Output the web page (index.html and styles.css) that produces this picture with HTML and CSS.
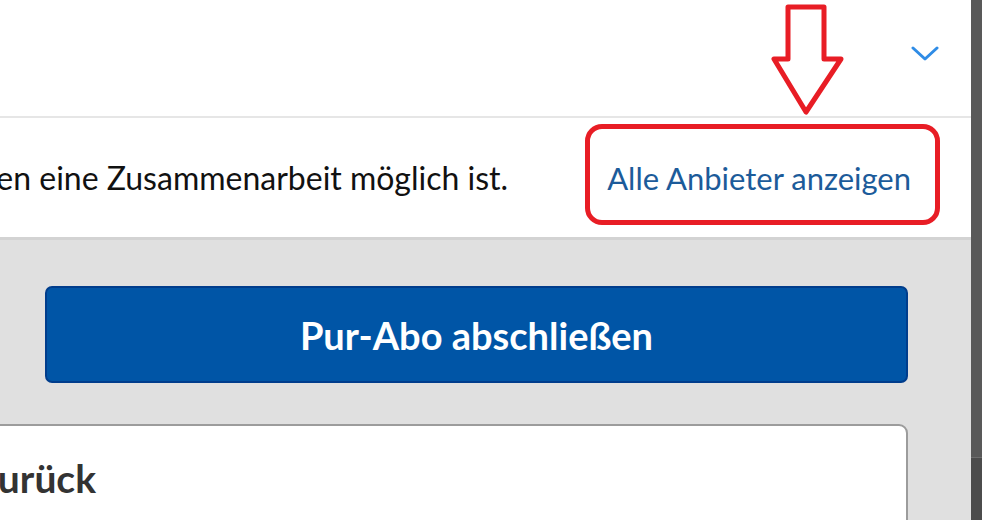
FILE: index.html
```html
<!DOCTYPE html>
<html lang="de">
<head>
  <meta charset="UTF-8">
  <meta name="viewport" content="width=device-width, initial-scale=1.0">
  <title>Datenschutz-Einstellungen</title>
  <link rel="stylesheet" href="styles.css">
</head>
<body>
  <div class="screen">
    <div class="dialog">
      <div class="dialog-head">
        <button class="toggle" aria-label="Details">
          <svg width="28" height="16" viewBox="0 0 28 16"><path d="M2 2 L14 13 L26 2" fill="none" stroke="#2f8ce6" stroke-width="3" stroke-linecap="round" stroke-linejoin="round"/></svg>
        </button>
      </div>

      <div class="vendors">
        <div class="vendors-text">
          <span>Hier finden Sie alle Anbieter, mit denen eine Zusammenarbeit möglich ist.</span>
        </div>
        <a href="#" class="vendors-link">Alle Anbieter anzeigen</a>
      </div>

      <div class="actions">
        <button class="btn-primary">Pur-Abo abschließen</button>
        <div class="back-card">
          <span class="back-label">Zurück</span>
        </div>
      </div>
    </div>

    <div class="scrollbar">
      <div class="scroll-thumb"></div>
    </div>

    <!-- annotation drawn over the screenshot -->
    <svg class="mark-arrow" width="80" height="120" viewBox="0 0 80 120">
      <path d="M17 6 H53 V58 H70 L35 111 L3 58 H17 Z" fill="none" stroke="#e81d25" stroke-width="5" stroke-linejoin="round"/>
    </svg>
    <div class="mark-box"></div>
  </div>
</body>
</html>
```

FILE: styles.css
```css
body {
  margin: 0;
  font-family: Lato, "Open Sans", sans-serif;
  color: #111;
  overflow: hidden;
}
.screen {
  display: flex;
  height: 520px;
  position: relative;
  overflow: hidden;
}
.dialog {
  width: 971px;
  flex-shrink: 0;
  background: #fff;
  display: flex;
  flex-direction: column;
}
.dialog-head {
  flex-shrink: 0;
  height: 118px;
  box-sizing: border-box;
  border-bottom: 2px solid #e6e6e6;
  display: flex;
  justify-content: flex-end;
  align-items: flex-start;
  padding: 46px 32px 0 0;
}
.toggle {
  background: none;
  border: none;
  padding: 0;
  display: block;
  line-height: 0;
  cursor: pointer;
}
.vendors {
  flex-shrink: 0;
  height: 122px;
  box-sizing: border-box;
  border-bottom: 3px solid #d3d3d3;
  display: flex;
  align-items: center;
  padding-right: 60px;
  font-size: 31px;
}
.vendors-text {
  flex: 1;
  min-width: 0;
  display: flex;
  justify-content: flex-end;
  overflow: hidden;
  white-space: nowrap;
  margin-right: 99px;
  font-size: 32px;
}
.vendors-link {
  color: #1c5b9a;
  text-decoration: none;
  white-space: nowrap;
}
.actions {
  flex: 1;
  min-height: 0;
  overflow: hidden;
  background: #e0e0e0;
  padding: 46px 63px 0 45px;
  display: flex;
  flex-direction: column;
}
.btn-primary {
  flex-shrink: 0;
  height: 97px;
  background: #0055a6;
  border: 2px solid #003d8c;
  border-radius: 7px;
  color: #fff;
  font-family: inherit;
  font-size: 38px;
  font-weight: bold;
  cursor: pointer;
}
.back-card {
  flex-shrink: 0;
  margin-top: 41px;
  margin-left: -80px;
  height: 140px;
  background: #fff;
  border: 2px solid #9c9c9c;
  border-radius: 9px;
  padding: 29px 0 0 8px;
}
.back-label {
  font-size: 39px;
  font-weight: bold;
  color: #333;
}
.scrollbar {
  flex: 1;
  background: #595959;
  display: flex;
  flex-direction: column;
  justify-content: flex-end;
}
.scroll-thumb {
  height: 62px;
  background: #4c4c4c;
  border-top: 1px solid #6e6e6e;
}
.mark-arrow {
  position: absolute;
  left: 771px;
  top: 1px;
}
.mark-box {
  position: absolute;
  left: 585px;
  top: 124px;
  width: 345px;
  height: 91px;
  border: 5px solid #e81d25;
  border-radius: 17px;
}
```
